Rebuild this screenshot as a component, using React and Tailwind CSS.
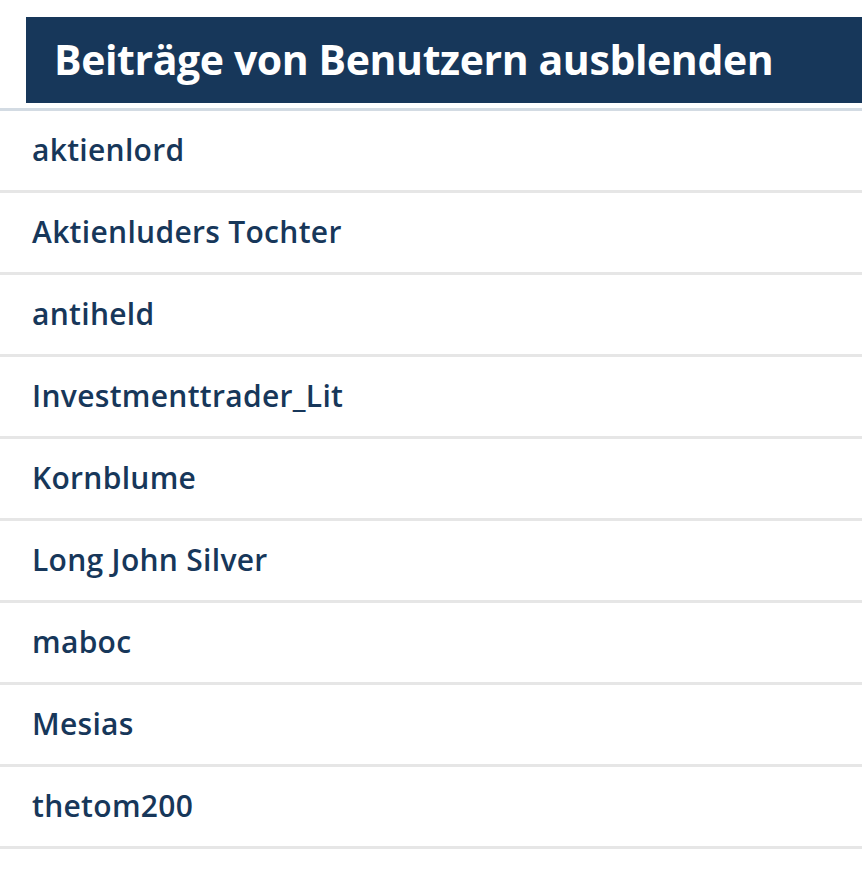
const USERS = [
  'aktienlord',
  'Aktienluders Tochter',
  'antiheld',
  'Investmenttrader_Lit',
  'Kornblume',
  'Long John Silver',
  'maboc',
  'Mesias',
  'thetom200',
];

export default function App() {
  return (
    <div className="w-full min-h-screen bg-white pt-[17px]" style={{ fontFamily: '"Open Sans", "Noto Sans", sans-serif' }}>
      {/* Title bar */}
      <div className="ml-[26px] h-[86px] bg-[#17375a] flex items-center pl-[28px]">
        <h1 className="text-white font-bold text-[41px] leading-none tracking-[-0.4px] pb-[1px]">
          Beiträge von Benutzern ausblenden
        </h1>
      </div>
      <div className="mt-[5px] h-[3px] bg-[#d3dbe3]" />

      {/* Hidden users */}
      <ul>
        {USERS.map((name) => (
          <li key={name} className="h-[82px] flex items-center pl-[32px] pb-[3px] border-b-[3px] border-[#e6e6e6] text-[#17375a] font-semibold text-[30px] tracking-[0.3px]">
            {name}
          </li>
        ))}
      </ul>
    </div>
  );
}
